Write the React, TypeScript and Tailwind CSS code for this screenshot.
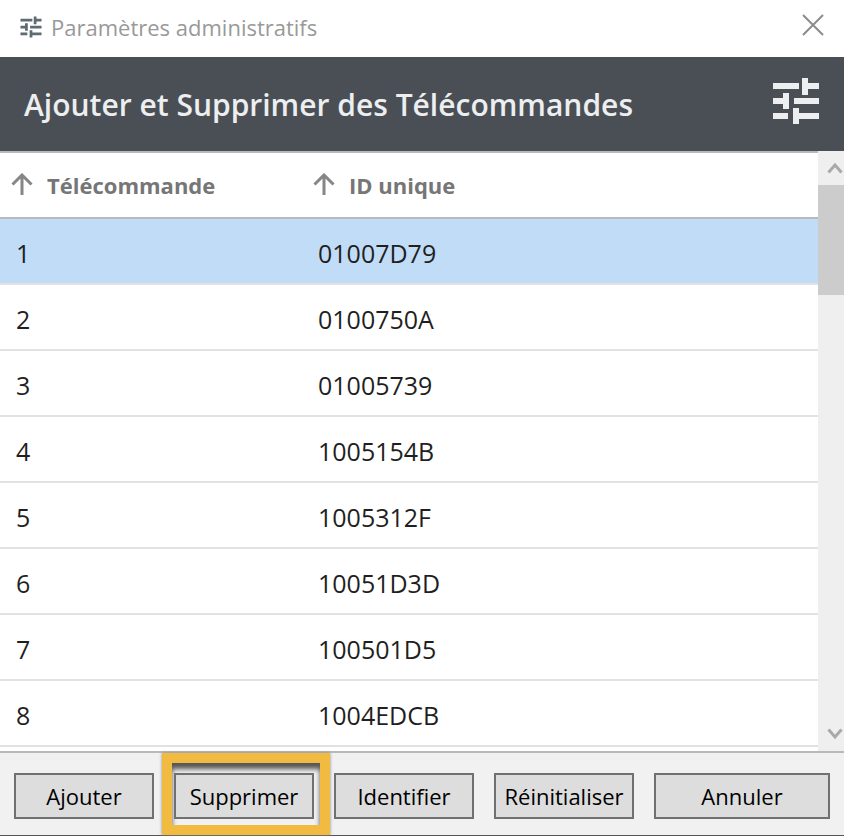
const remotes = [
  { id: 1, uid: "01007D79" },
  { id: 2, uid: "0100750A" },
  { id: 3, uid: "01005739" },
  { id: 4, uid: "1005154B" },
  { id: 5, uid: "1005312F" },
  { id: 6, uid: "10051D3D" },
  { id: 7, uid: "100501D5" },
  { id: 8, uid: "1004EDCB" },
]

const selectedId = 1

const actions = [
  { label: "Ajouter" },
  { label: "Supprimer", highlighted: true },
  { label: "Identifier" },
  { label: "Réinitialiser" },
]

function TuneIcon({ className }: { className?: string }) {
  return (
    <svg viewBox="0 0 48 48" fill="currentColor" className={className} aria-hidden="true">
      <path d="M1 6h26v6H1z M30 1h6v5h11v6H36v6h-6z" />
      <path d="M1 21h10v-5h6v16h-6v-5H1z M22 21h25v6H22z" />
      <path d="M1 36h15v6H1z M21 31h6v5h20v6H27v5h-6z" />
    </svg>
  )
}

function SortArrow() {
  return (
    <svg viewBox="0 0 22 24" className="h-6 w-[22px] shrink-0" fill="none" stroke="#868686" strokeWidth="3" aria-hidden="true">
      <path d="M11 2v20M1.500 11.500L11 2l9.500 9.500" />
    </svg>
  )
}

function ColumnHeader({ label }: { label: string }) {
  return (
    <button className="flex h-16 items-center gap-[14px] font-bold text-[#767676]">
      <SortArrow />
      {label}
    </button>
  )
}

function Chevron({ className }: { className?: string }) {
  return (
    <svg viewBox="0 0 16 12" className={className} fill="none" stroke="#a9a9a9" strokeWidth="3" aria-hidden="true">
      <path d="M1.500 10.500L8 3l6.500 7.500" />
    </svg>
  )
}

function Scrollbar() {
  return (
    <div className="flex w-[26px] shrink-0 flex-col bg-[#efefef]">
      <button aria-label="Défiler vers le haut" className="flex h-[34px] items-center justify-end pr-px">
        <Chevron className="h-3 w-4" />
      </button>
      <div className="flex-1">
        <div className="h-[110px] bg-[#cccccc]" />
      </div>
      <button aria-label="Défiler vers le bas" className="flex h-[34px] items-center justify-end pr-px">
        <Chevron className="h-3 w-4 rotate-180" />
      </button>
    </div>
  )
}

export default function App() {
  return (
    <div className="bg-white font-['Open_Sans','Noto_Sans',sans-serif] text-[22px] leading-8 text-[#1f1f1f]">
      <div className="flex h-[57px] items-center gap-2 pr-5 pb-1 pl-[19px]">
        <TuneIcon className="h-[22px] w-6 text-[#5f6b70]" />
        <span className="flex-1 text-[#999999]">Paramètres administratifs</span>
        <button aria-label="Fermer" className="pb-1">
          <svg viewBox="0 0 22 22" className="size-[22px]" fill="none" stroke="#8c8c8c" strokeWidth="2" aria-hidden="true">
            <path d="M1 1l20 20M21 1L1 21" />
          </svg>
        </button>
      </div>

      <header className="flex h-[94px] items-start justify-between bg-[#4a4f55] px-6 pt-5 text-[#eceef0]">
        <h1 className="text-[30px] leading-[56px] font-semibold">Ajouter et Supprimer des Télécommandes</h1>
        <TuneIcon className="size-12" />
      </header>

      <div className="flex">
        <div className="flex-1 border-t-2 border-[#b9b9b9] pb-1">
          <table className="w-full table-fixed border-collapse text-left">
            <thead>
              <tr className="border-b-2 border-[#b9b9b9]">
                <th className="w-[302px] p-0 pl-[11px]">
                  <ColumnHeader label="Télécommande" />
                </th>
                <th className="p-0 pl-[11px]">
                  <ColumnHeader label="ID unique" />
                </th>
              </tr>
            </thead>
            <tbody className="text-[25px]">
              {remotes.map((remote) => (
                <tr
                  key={remote.id}
                  className={
                    remote.id === selectedId
                      ? "h-[66px] border-b-2 border-[#e2e2e2] bg-[#c1dcf7]"
                      : "h-[66px] border-b-2 border-[#e2e2e2]"
                  }
                >
                  <td className="p-0 pt-1 pl-4">{remote.id}</td>
                  <td className="p-0 pt-1 pl-4">{remote.uid}</td>
                </tr>
              ))}
            </tbody>
          </table>
        </div>
        <Scrollbar />
      </div>

      <footer className="flex gap-5 border-t-2 border-b border-t-[#b9b9b9] border-b-[#555555] bg-[#f1f1f1] px-[14px] pt-5 pb-4 text-black">
        {actions.map((action) => (
          <div key={action.label} className="relative w-[140px]">
            {action.highlighted && (
              <div className="pointer-events-none absolute -top-5 -right-4 -bottom-4 -left-3 border-[10px] border-[#f0bb40] shadow-[0_0_3px_#888888,inset_0_6px_5px_#555555]" />
            )}
            <button className="relative h-[46px] w-full border-2 border-[#707070] bg-[#dddddd]">{action.label}</button>
          </div>
        ))}
        <button className="h-[46px] flex-1 border-2 border-[#707070] bg-[#dddddd]">Annuler</button>
      </footer>
    </div>
  )
}
